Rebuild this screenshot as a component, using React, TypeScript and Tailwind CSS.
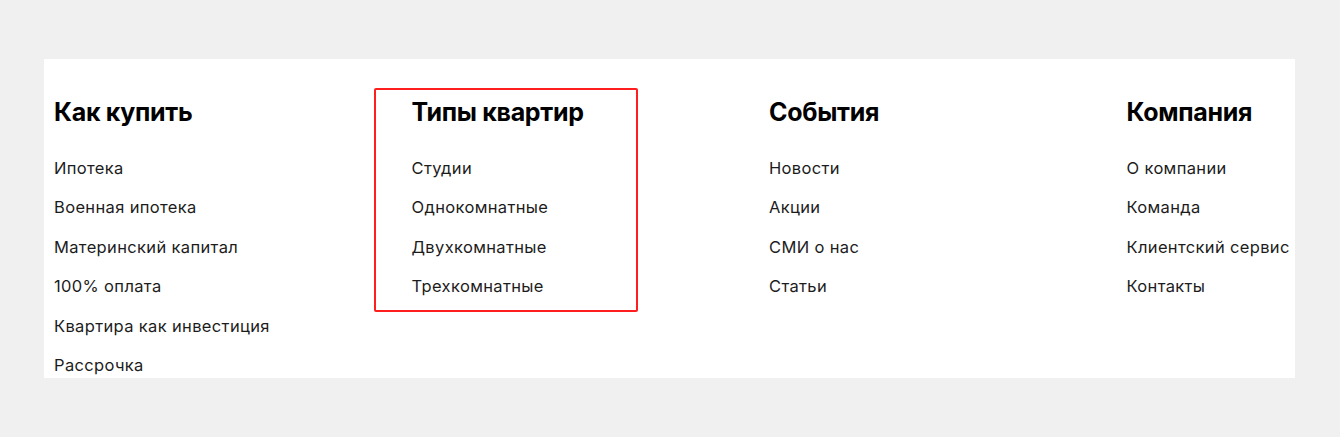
import React from "react";

const columns = [
  { title: "Как купить", links: ["Ипотека", "Военная ипотека", "Материнский капитал", "100% оплата", "Квартира как инвестиция", "Рассрочка"] },
  { title: "Типы квартир", links: ["Студии", "Однокомнатные", "Двухкомнатные", "Трехкомнатные"] },
  { title: "События", links: ["Новости", "Акции", "СМИ о нас", "Статьи"] },
  { title: "Компания", links: ["О компании", "Команда", "Клиентский сервис", "Контакты"] },
];

export default function App() {
  return (
    <div className="h-[437px] w-[1340px] bg-[#f0f0f0] pt-[59px]" style={{ fontFamily: "Inter, 'Noto Sans', sans-serif" }}>
      <div className="relative ml-[44px] h-[319px] w-[1251px] overflow-hidden bg-white pl-[10px] pt-[37px]">
        <div className="flex">
          {columns.map((c) => (
            <div key={c.title} className="w-[357.5px] shrink-0">
              <h3 className="text-[25px] font-bold leading-[32px] tracking-[-0.3px] text-black">{c.title}</h3>
              <ul className="mt-[27.5px] flex flex-col gap-[15.6px]">
                {c.links.map((l) => (
                  <li key={l} className="text-[16.5px] leading-[24px] tracking-[0.35px] text-[#1c1c1c] whitespace-nowrap">{l}</li>
                ))}
              </ul>
            </div>
          ))}
        </div>
        <div className="absolute left-[330px] top-[29px] h-[224px] w-[264px] rounded-[2px] border-2 border-[#ff1f1f]" />
      </div>
    </div>
  );
}
